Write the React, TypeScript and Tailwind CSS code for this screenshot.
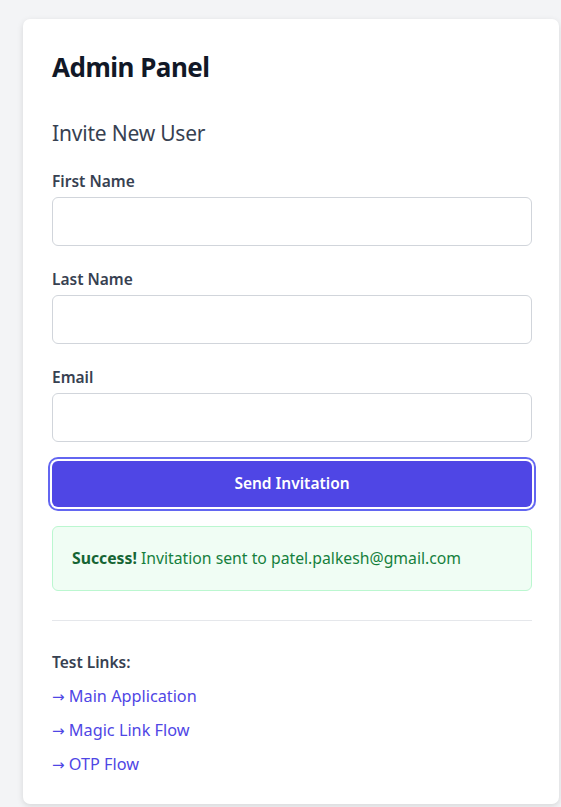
export default function App() {
  const fields = ["First Name", "Last Name", "Email"];
  const links = ["Main Application", "Magic Link Flow", "OTP Flow"];

  return (
    <div
      className="min-h-screen bg-[#f3f4f6] pt-[19px] pl-[23px] pr-[2px] pb-[4px]"
      style={{ fontFamily: '"Noto Sans", "Open Sans", sans-serif' }}
    >
      <div className="w-[536px] bg-white rounded-[7px] shadow-[0_2px_6px_rgba(0,0,0,0.12)] pl-[29px] pr-[27px] pt-[30px] pb-[27px]">
        <h1 className="text-[26px] leading-[36px] font-bold tracking-[-0.5px] text-[#111827]">
          Admin Panel
        </h1>
        <h2 className="mt-[34px] text-[21px] leading-[29px] font-normal tracking-[-0.2px] text-[#374151]">
          Invite New User
        </h2>

        <div className="mt-[23px]">
          {fields.map((f) => (
            <div key={f} className="mb-[23px] last:mb-0">
              <label className="block text-[15.5px] leading-[20px] font-semibold text-[#374151] mb-[6px]">
                {f}
              </label>
              <input
                type={f === "Email" ? "email" : "text"}
                className="block w-full h-[49px] rounded-[6px] border border-[#d1d5db] bg-white px-3 outline-none"
              />
            </div>
          ))}
        </div>

        <button className="mt-[19px] w-full h-[46px] rounded-[6px] bg-[#4f46e5] text-white text-[15.5px] font-semibold ring-2 ring-[#6366f1] ring-offset-2">
          Send Invitation
        </button>

        <div className="mt-[19px] h-[65px] flex items-center px-[19px] rounded-[6px] border border-[#bbf7d0] bg-[#f0fdf4] text-[15.75px] text-[#15803d]">
          <p>
            <span className="font-bold text-[#166534]">Success!</span> Invitation
            sent to patel.palkesh@gmail.com
          </p>
        </div>

        <div className="mt-[29px] border-t border-[#e5e7eb]" />

        <div className="mt-[31px]">
          <p className="text-[15.5px] leading-[20px] font-semibold text-[#374151]">
            Test Links:
          </p>
          <div className="mt-[12px] flex flex-col gap-[9px]">
            {links.map((l) => (
              <a
                key={l}
                href="#"
                className="text-[16.25px] leading-[24px] text-[#4f46e5] hover:underline"
              >
                <span style={{ fontFamily: '"DejaVu Sans", sans-serif' }} className="text-[15px]">
                  →
                </span>{" "}
                {l}
              </a>
            ))}
          </div>
        </div>
      </div>
    </div>
  );
}
